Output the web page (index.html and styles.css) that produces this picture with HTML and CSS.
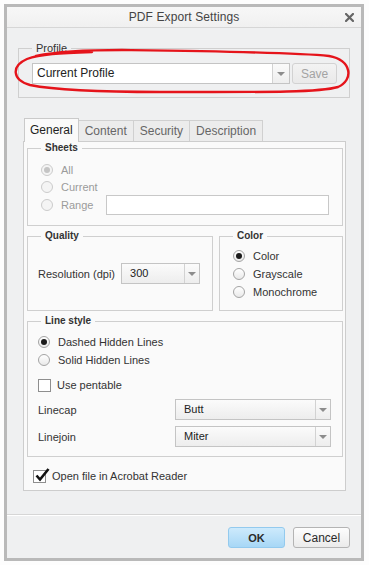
FILE: index.html
```html
<!DOCTYPE html>
<html lang="en">
<head>
  <meta charset="UTF-8">
  <title>PDF Export Settings</title>
  <link rel="stylesheet" href="styles.css">
</head>
<body>
  <div class="window">
    <div class="titlebar">
      <span class="title">PDF Export Settings</span>
      <svg class="close" width="9" height="9" viewBox="0 0 9 9">
        <path d="M1 1 L8 8 M8 1 L1 8" stroke="#666" stroke-width="2.2" stroke-linecap="square"/>
      </svg>
    </div>

    <div class="content">
      <fieldset class="group profile">
        <legend>Profile</legend>
        <div class="profile-row">
          <div class="combo combo-edit">
            <span class="combo-value">Current Profile</span>
            <span class="combo-arrow"><i></i></span>
          </div>
          <button class="btn btn-save" disabled>Save</button>
        </div>
      </fieldset>

      <div class="tabbox">
        <div class="tabs">
          <div class="tab active">General</div>
          <div class="tab">Content</div>
          <div class="tab">Security</div>
          <div class="tab">Description</div>
        </div>

        <div class="panel">
          <fieldset class="group">
            <legend>Sheets</legend>
            <div class="group-body sheets">
              <div class="option disabled"><span class="radio checked"></span>All</div>
              <div class="option disabled"><span class="radio"></span>Current</div>
              <div class="option disabled range-row">
                <span class="range-label"><span class="radio"></span>Range</span>
                <span class="textbox"></span>
              </div>
            </div>
          </fieldset>

          <div class="split">
            <fieldset class="group quality">
              <legend>Quality</legend>
              <div class="group-body quality-body">
                <span class="field-label">Resolution (dpi)</span>
                <div class="combo combo-res">
                  <span class="combo-value">300</span>
                  <span class="combo-arrow"><i></i></span>
                </div>
              </div>
            </fieldset>

            <fieldset class="group color">
              <legend>Color</legend>
              <div class="group-body color-body">
                <div class="option"><span class="radio checked"></span>Color</div>
                <div class="option"><span class="radio"></span>Grayscale</div>
                <div class="option"><span class="radio"></span>Monochrome</div>
              </div>
            </fieldset>
          </div>

          <fieldset class="group linestyle">
            <legend>Line style</legend>
            <div class="group-body linestyle-body">
              <div class="option"><span class="radio checked"></span>Dashed Hidden Lines</div>
              <div class="option"><span class="radio"></span>Solid Hidden Lines</div>
              <div class="option check-row"><span class="checkbox"></span>Use pentable</div>
              <div class="select-row first">
                <span class="select-label">Linecap</span>
                <div class="combo combo-wide">
                  <span class="combo-value">Butt</span>
                  <span class="combo-arrow"><i></i></span>
                </div>
              </div>
              <div class="select-row">
                <span class="select-label">Linejoin</span>
                <div class="combo combo-wide">
                  <span class="combo-value">Miter</span>
                  <span class="combo-arrow"><i></i></span>
                </div>
              </div>
            </div>
          </fieldset>

          <div class="option open-row">
            <span class="checkbox checked">
              <svg class="tick" width="16" height="16" viewBox="0 0 16 16">
                <path d="M2.5 8.5 L6 12.5 L14.5 2" fill="none" stroke="#111" stroke-width="2.6"/>
              </svg>
            </span>
            Open file in Acrobat Reader
          </div>
        </div>
      </div>
    </div>

    <div class="footer">
      <button class="btn btn-ok">OK</button>
      <button class="btn btn-cancel">Cancel</button>
    </div>
  </div>

  <!-- hand drawn red mark round the profile box -->
  <svg class="scribble" width="369" height="100" viewBox="0 0 369 100">
    <path d="M36 56 C60 51 100 50 122 50 C200 51 290 52 329 56 C352 60 354 80 338 87 C318 93 250 92 160 92 C100 92 55 90 30 85 C12 80 11 66 27 59 C40 54 60 53 92 52"
          fill="none" stroke="#e5141b" stroke-width="2.4" stroke-linecap="round"/>
  </svg>
</body>
</html>
```

FILE: styles.css
```css
* {
  box-sizing: border-box;
}

body {
  margin: 0;
  background: #fdfdfd;
  font-family: "Liberation Sans", Arial, sans-serif;
  font-size: 11px;
  color: #333;
  position: relative;
}

.window {
  margin: 4px 0 0 4px;
  width: 360px;
  height: 557px;
  border: 3px solid #b9b9b9;
  background: #eff0f1;
  display: flex;
  flex-direction: column;
}

.titlebar {
  height: 21px;
  flex: 0 0 21px;
  border-bottom: 1px solid #d6d6d6;
  background: linear-gradient(#f7f7f7, #f0f0f0);
  display: flex;
  align-items: center;
  justify-content: center;
  position: relative;
}

.title {
  font-size: 12px;
  color: #444;
  letter-spacing: 0.1px;
}

.close {
  position: absolute;
  right: 7px;
  top: 6px;
}

.content {
  flex: 1;
  padding: 14px 11px 0;
}

/* fieldsets */
.group {
  margin: 0;
  padding: 0;
  min-width: 0;
  border: 1px solid #cfcfcf;
}

.group legend {
  margin-left: 13px;
  padding: 0 4px;
  font-size: 10px;
  font-weight: bold;
  line-height: 12px;
  color: #333;
}

.profile legend {
  font-size: 11px;
  font-weight: normal;
}

.profile-row {
  display: flex;
  padding: 9px 12px 13px 13px;
}

/* combos */
.combo {
  display: flex;
  height: 21px;
  border: 1px solid #c4c4c4;
  background: linear-gradient(#fbfbfb, #ededed);
  color: #222;
}

.combo-value {
  flex: 1;
  line-height: 19px;
  padding-left: 8px;
}

.combo-arrow {
  width: 15px;
  border-left: 1px solid #d2d2d2;
  display: flex;
  align-items: center;
  justify-content: center;
}

.combo-arrow i {
  width: 0;
  height: 0;
  border-left: 4px solid transparent;
  border-right: 4px solid transparent;
  border-top: 4px solid #8c8c8c;
}

.combo-edit {
  width: 259px;
  background: #fff;
  font-size: 12px;
}

.combo-edit .combo-value {
  padding-left: 4px;
}

.combo-edit .combo-arrow {
  width: 17px;
  background: linear-gradient(#fafafa, #eeeeee);
}

/* buttons */
.btn {
  font-family: inherit;
  font-size: 12px;
  height: 21px;
  border-radius: 3px;
  padding: 0;
}

.btn-save {
  width: 45px;
  margin-left: 2px;
  border: 1px solid #d2d2d2;
  background: linear-gradient(#f3f3f3, #e9e9e9);
  color: #a3a3a3;
}

/* tabs */
.tabbox {
  margin: 20px 4px 0 5px;
}

.tabs {
  display: flex;
  align-items: flex-end;
  height: 23px;
  padding-left: 1px;
}

.tab {
  height: 21px;
  line-height: 20px;
  padding: 0 6px;
  font-size: 12px;
  color: #666;
  border: 1px solid #d0d0d0;
  border-bottom: none;
  background: #ececec;
  margin-left: -1px;
}

.tab:first-child {
  margin-left: 0;
}

.tab.active {
  height: 24px;
  line-height: 22px;
  margin-bottom: -1px;
  padding: 0 5px;
  color: #1e1e1e;
  background: #fafafa;
  border-color: #cacaca;
  z-index: 1;
}

.panel {
  border: 1px solid #cdcdcd;
  background: #fafafa;
  padding: 0 2px 5px 3px;
}

.group-body {
  padding: 0 12px 0 10px;
}

/* options */
.option {
  display: flex;
  align-items: center;
  gap: 8px;
  height: 18px;
  color: #333;
  white-space: nowrap;
}

.option.disabled {
  color: #9b9b9b;
}

.radio {
  width: 12px;
  height: 12px;
  border-radius: 50%;
  border: 1px solid #a4a4a4;
  background: linear-gradient(#ffffff, #e9e9e9);
  display: flex;
  align-items: center;
  justify-content: center;
  flex: 0 0 12px;
}

.radio.checked::after {
  content: "";
  width: 6px;
  height: 6px;
  border-radius: 50%;
  background: #1b1b1b;
}

.disabled .radio {
  border-color: #cbcbcb;
  background: #f4f4f4;
}

.disabled .radio.checked::after {
  background: #c4c4c4;
}

.checkbox {
  width: 13px;
  height: 13px;
  flex: 0 0 13px;
  border: 1px solid #8e8e8e;
  background: #fff;
  margin-right: -1px;
  position: relative;
}

.tick {
  position: absolute;
  left: 0;
  top: -4px;
}

/* sheets */
.sheets {
  padding: 7px 13px 10px 13px;
}

.sheets .option {
  height: 17px;
}

.range-row.option {
  height: 20px;
  gap: 0;
}

.range-label {
  display: flex;
  align-items: center;
  gap: 8px;
  width: 65px;
}

.textbox {
  flex: 1;
  height: 20px;
  border: 1px solid #c8c8c8;
  background: #fff;
}

/* quality & color */
.split {
  display: flex;
  gap: 6px;
  margin-top: 4px;
}

.quality {
  flex: 0 0 186px;
}

.color {
  flex: 1;
}

.quality-body {
  display: flex;
  align-items: center;
  gap: 6px;
  padding-top: 21px;
}

.field-label {
  color: #333;
  white-space: nowrap;
}

.combo-res {
  width: 82px;
}

.color-body {
  padding: 5px 10px 9px 13px;
}

/* line style */
.linestyle {
  margin-top: 4px;
}

.linestyle-body {
  padding: 6px 11px 9px 10px;
}

.check-row {
  margin-top: 7px;
  gap: 7px;
}

.select-row {
  display: flex;
  align-items: center;
  margin-top: 6px;
}

.select-row.first {
  margin-top: 5px;
}

.select-label {
  width: 137px;
}

.combo-wide {
  flex: 1;
}

.open-row {
  margin: 10px 0 0 6px;
  gap: 7px;
}

/* footer */
.footer {
  flex: 0 0 44px;
  border-top: 1px solid #d6d6d6;
  box-shadow: inset 0 1px #fff;
  padding: 12px 11px 10px;
  display: flex;
  justify-content: flex-end;
  gap: 8px;
}

.btn-ok {
  width: 57px;
  border: 1px solid #93caee;
  background: linear-gradient(#cdeafc, #a7d7f6);
  color: #2a2a2a;
  font-weight: bold;
  font-size: 11px;
}

.btn-cancel {
  width: 57px;
  border: 1px solid #b4b4b4;
  background: linear-gradient(#fdfdfd, #ebebeb);
  color: #2a2a2a;
}

.scribble {
  position: absolute;
  left: 0;
  top: 0;
  pointer-events: none;
}
```
